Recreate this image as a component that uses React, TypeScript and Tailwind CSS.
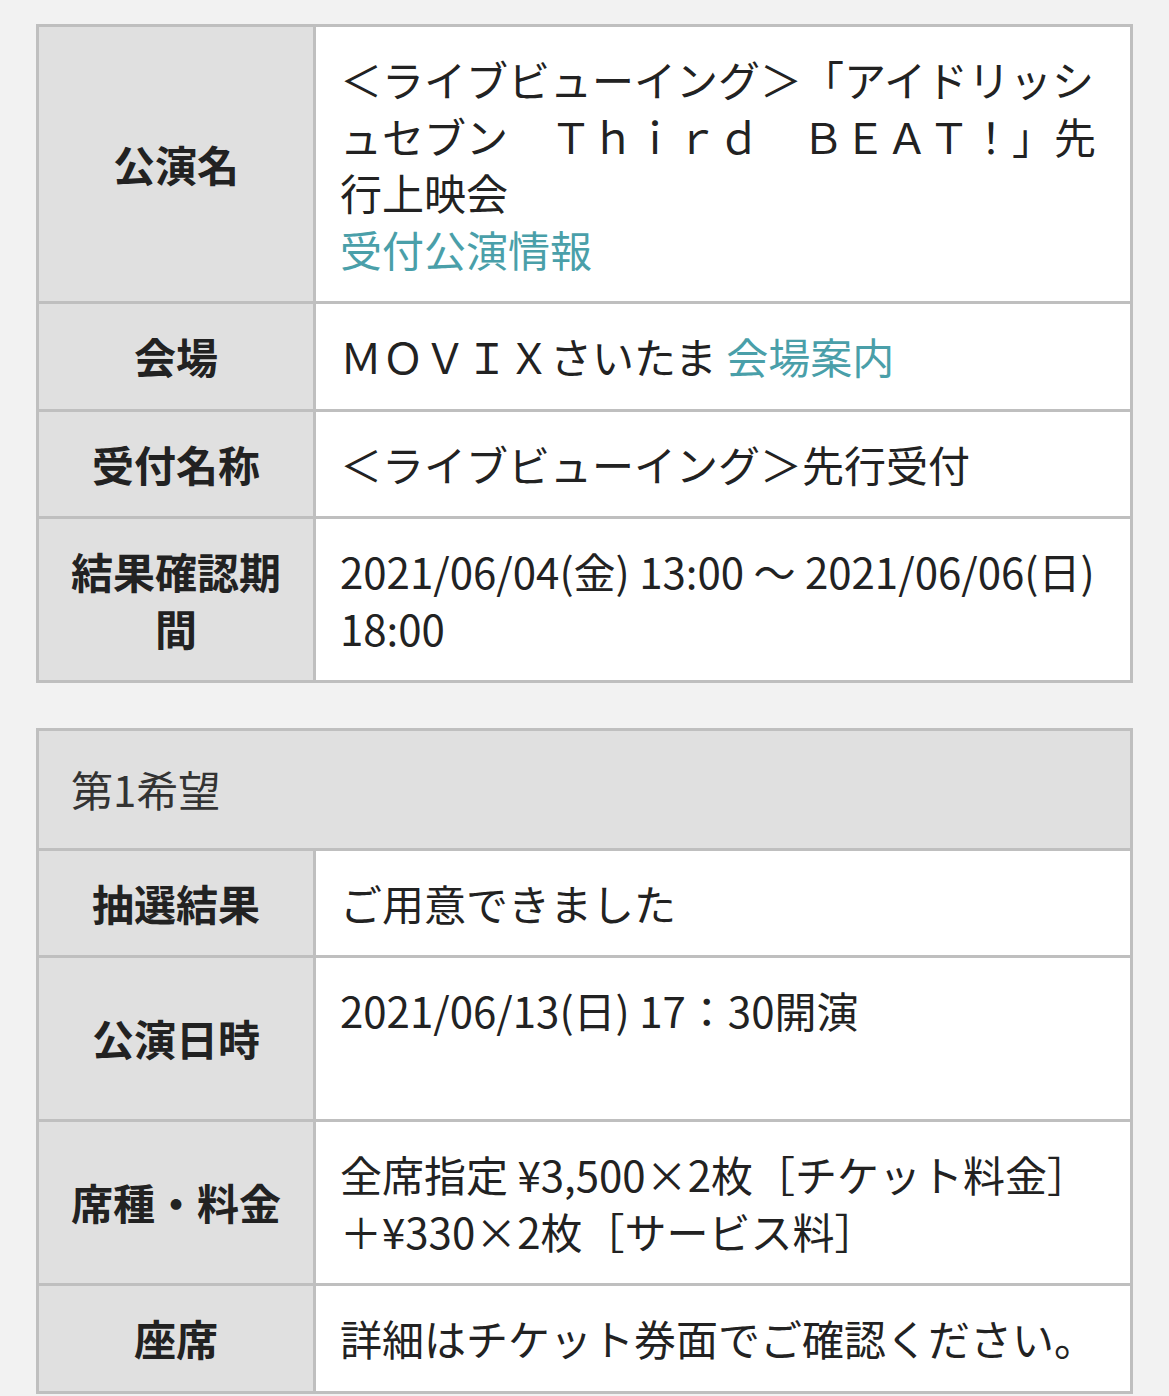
import React from 'react';

type Row = {
  label: React.ReactNode;
  content: React.ReactNode;
};

const font = { fontFamily: '"Noto Sans CJK JP", "Noto Sans", sans-serif' };

const Link: React.FC<{ children: React.ReactNode }> = ({ children }) => (
  <a href="#" className="text-[#4a9fa9]">
    {children}
  </a>
);

const TableRow: React.FC<{ row: Row; first?: boolean }> = ({ row, first }) => (
  <div className={`flex ${first ? '' : 'border-t-[3px] border-[#bfbfbf]'}`}>
    <div className="w-[277px] shrink-0 bg-[#e0e0e0] border-r-[3px] border-[#bfbfbf] px-6 py-6 flex items-center justify-center text-center font-bold text-[#222]">
      <span>{row.label}</span>
    </div>
    <div className="flex-1 bg-white px-6 py-6 text-[#222]">{row.content}</div>
  </div>
);

const infoRows: Row[] = [
  {
    label: '公演名',
    content: (
      <>
        ＜ライブビューイング＞「アイドリッシュセブン　Ｔｈｉｒｄ　ＢＥＡＴ！」先行上映会
        <br />
        <Link>受付公演情報</Link>
      </>
    ),
  },
  {
    label: '会場',
    content: (
      <>
        ＭＯＶＩＸさいたま <Link>会場案内</Link>
      </>
    ),
  },
  { label: '受付名称', content: '＜ライブビューイング＞先行受付' },
  { label: '結果確認期間', content: '2021/06/04(金) 13:00 ～ 2021/06/06(日) 18:00' },
];

const wishRows: Row[] = [
  { label: '抽選結果', content: 'ご用意できました' },
  {
    label: '公演日時',
    content: (
      <>
        2021/06/13(日) 17：30開演
        <br />
        &nbsp;
      </>
    ),
  },
  {
    label: '席種・料金',
    content: '全席指定 ¥3,500×2枚［チケット料金］＋¥330×2枚［サービス料］',
  },
  { label: '座席', content: '詳細はチケット券面でご確認ください。' },
];

export default function App() {
  return (
    <div className="min-h-screen bg-[#f2f2f2] pt-6 pb-1" style={font}>
      <div className="mx-9 text-[42px] leading-[56.5px]">
        {/* 公演情報 */}
        <div className="border-[3px] border-[#bfbfbf]">
          {infoRows.map((row, i) => (
            <TableRow key={i} row={row} first={i === 0} />
          ))}
        </div>

        {/* 第1希望 */}
        <div className="mt-[45px] border-[3px] border-[#bfbfbf]">
          <div className="bg-[#e0e0e0] px-8 py-[30px] text-[#333]">第1希望</div>
          {wishRows.map((row, i) => (
            <TableRow key={i} row={row} />
          ))}
        </div>
      </div>
    </div>
  );
}
